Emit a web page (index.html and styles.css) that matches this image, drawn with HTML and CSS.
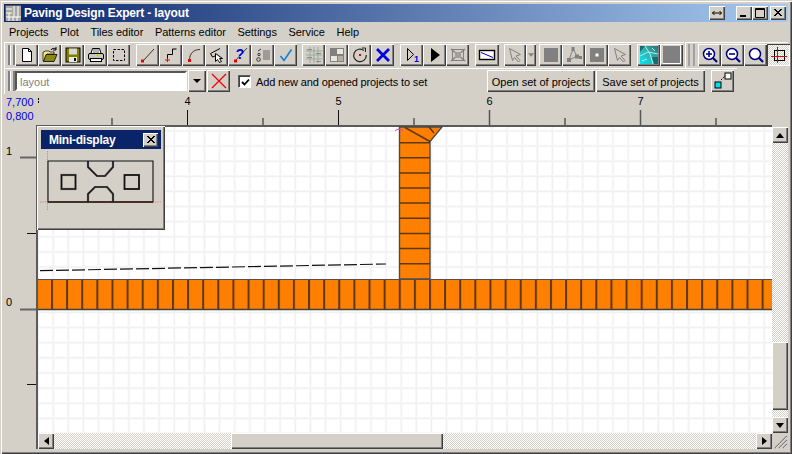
FILE: index.html
```html
<!DOCTYPE html>
<html lang="en">
<head>
<meta charset="utf-8">
<title>Paving Design Expert - layout</title>
<link rel="stylesheet" href="styles.css">
</head>
<body>
<div class="window">
  <header class="titlebar">
    <svg class="app-icon" viewBox="0 0 16 16"><rect width="16" height="16" fill="#a8a8a0"/><path d="M0 4h7M0 8h7M0 12h16M9 0v12M13 0v12M4 8v8M8 12v4M12 12v4" stroke="#fff" fill="none"/><path d="M0 .5h16M.5 0v16" stroke="#555" fill="none"/></svg>
    <span class="title-text">Paving Design Expert - layout</span>
    <button class="cap cap-wide"><svg viewBox="0 0 16 14"><path d="M3.500 7h9M5.500 5l-2 2 2 2M10.500 5l2 2-2 2" fill="none" stroke="#000"/></svg></button>
    <div class="cap-group">
      <button class="cap"><svg viewBox="0 0 16 14"><rect x="4" y="9" width="6" height="2" fill="#000"/></svg></button>
      <button class="cap"><svg viewBox="0 0 16 14"><path d="M3.500 2.500h9v9h-9zM3.500 3.500h9" fill="none" stroke="#000"/></svg></button>
      <button class="cap cap-close"><svg viewBox="0 0 16 14"><path d="M4 3l7 7M5 3l7 7M11 3l-7 7M12 3l-7 7" stroke="#000" fill="none"/></svg></button>
    </div>
  </header>

  <nav class="menubar">
    <span>Projects</span><span>Plot</span><span>Tiles editor</span><span>Patterns editor</span><span>Settings</span><span>Service</span><span>Help</span>
  </nav>

  <div class="bar-row">
    <div class="toolbar tb-main">
      <i class="grip"></i>
      <button class="tool"><svg viewBox="0 0 16 16"><path d="M3.500 1.500h6l3 3v10h-9z" fill="#fff" stroke="#000"/><path d="M9.500 1.500v3h3" fill="none" stroke="#000"/></svg></button>
      <button class="tool"><svg viewBox="0 0 16 16"><path d="M1 14V5h1l1-1h4l1 1h4v2H5l-2 7z" fill="#f4e48c" stroke="#000" stroke-width=".7"/><path d="M1.500 14.500l2.500-7h11l-3 7z" fill="#8a8a10" stroke="#000" stroke-width=".8"/><path d="M9 3c1-2 3-2 5-1M14 0v3h-3" fill="none" stroke="#000"/></svg></button>
      <button class="tool"><svg viewBox="0 0 16 16"><rect x="1" y="1" width="14" height="14" fill="#808000" stroke="#000"/><rect x="4" y="1.500" width="8" height="6" fill="#d8d8d0"/><rect x="4" y="10" width="8" height="5" fill="#e8e8e0"/><rect x="9" y="11" width="2" height="3" fill="#000"/></svg></button>
      <button class="tool"><svg viewBox="0 0 16 16"><path d="M4.500 1.500h7l1.500 5h-10z" fill="#fff" stroke="#000"/><path d="M5 3h6M5 5h6" stroke="#666"/><rect x=".5" y="6.500" width="15" height="6" rx="1.500" fill="#c8c8c0" stroke="#000"/><rect x="2.500" y="11.500" width="11" height="3" fill="#fff" stroke="#000"/><rect x="8" y="8" width="3" height="1" fill="#dc0"/></svg></button>
      <button class="tool"><svg viewBox="0 0 16 16"><rect x="2.500" y="2.500" width="11" height="11" fill="none" stroke="#000" stroke-dasharray="2.500 1.500"/></svg></button>
      <button class="tool sp6"><svg viewBox="0 0 16 16"><path d="M3 14L14 2" stroke="#333" fill="none"/><rect x="1" y="12.500" width="3" height="3" fill="#e00"/></svg></button>
      <button class="tool"><svg viewBox="0 0 16 16"><path d="M4.500 13V7.500h5V2h4" stroke="#000" fill="none"/><path d="M2 13h5M4.500 11v4" stroke="#e00" fill="none"/></svg></button>
      <button class="tool"><svg viewBox="0 0 16 16"><path d="M3.500 13C3.500 7 7 2.500 14 2.500" stroke="#333" fill="none"/><rect x="2" y="12" width="3" height="3" fill="#e00"/></svg></button>
      <button class="tool"><svg viewBox="0 0 16 16"><path d="M1.500 6.500L11 1.500M1.500 6.500l2 3.500 5-2" fill="none" stroke="#000"/><path d="M6.500 6.500v8l2-2 2 3 2-1-2-3h3z" fill="#fff" stroke="#000"/></svg></button>
      <button class="tool"><svg viewBox="0 0 16 16"><path d="M2 15L15 1" stroke="#444" fill="none"/><text x="8" y="12" class="help-mark">?</text><rect x="2" y="12.500" width="3" height="3" fill="#e00"/></svg></button>
      <button class="tool"><svg viewBox="0 0 16 16"><path d="M8 4h7M8 6h7M8 8h7M8 10h7M8 12h7" stroke="#666" fill="none"/><circle cx="3.500" cy="12.500" r="1.800" fill="none" stroke="#333"/><circle cx="4" cy="7.500" r="1.200" fill="none" stroke="#333"/><path d="M3 4l3-2" stroke="#333"/></svg></button>
      <button class="tool"><svg viewBox="0 0 16 16"><path d="M2.500 9l3.500 4.500 7.500-11" fill="none" stroke="#1080d0" stroke-width="1.600"/></svg></button>
      <button class="tool sp5"><svg viewBox="0 0 16 16"><path d="M0 4h16M0 8h16M0 12h16M4 0v16M8 0v16M12 0v16" stroke="#9aaa9a" fill="none"/><path d="M1 2.500h5M10 6.500h5M1 10.500h5M10 14.500h5" stroke="#8a8a8a" fill="none"/></svg></button>
      <button class="tool"><svg viewBox="0 0 16 16"><rect x="1" y="1" width="14" height="14" fill="#808080"/><rect x="8" y="2" width="6" height="5" fill="#e8e8e0"/><rect x="2" y="9" width="6" height="5" fill="#e8e8e0"/><rect x="9" y="9" width="5" height="5" fill="#b0b0a8"/></svg></button>
      <button class="tool"><svg viewBox="0 0 16 16"><path d="M12 3.500A6.300 6.300 0 1 0 14.300 8" fill="none" stroke="#222" stroke-width="1.200"/><path d="M10 1h3.500v4" fill="none" stroke="#222"/><rect x="7" y="7" width="2" height="2" fill="#e00"/></svg></button>
      <button class="tool"><svg viewBox="0 0 16 16"><path d="M2 2l12 12M14 2L2 14" stroke="#0000e0" stroke-width="2.800" fill="none"/></svg></button>
      <button class="tool sp6"><svg viewBox="0 0 16 16"><path d="M3.500 1.500v12l6-6z" fill="none" stroke="#000"/><text x="10" y="15" class="one">1</text></svg></button>
      <button class="tool"><svg viewBox="0 0 16 16"><path d="M4 1l9 7-9 7z" fill="#000"/></svg></button>
      <button class="tool"><svg viewBox="0 0 16 16"><rect x="2.500" y="2.500" width="11" height="11" fill="none" stroke="#808080"/><path d="M1 2l14 12M15 2L1 14" stroke="#808080" stroke-width="1.400"/><rect x="5" y="5" width="6" height="6" fill="#a0a098"/></svg></button>
      <button class="tool tool-w24 sp6"><svg viewBox="0 0 16 16"><rect x=".5" y="3.500" width="15" height="9" fill="#fff" stroke="#000" stroke-width="1.400"/><path d="M2 5.500l12 5" stroke="#0000d0"/></svg></button>
      <button class="tool tool-w22 sp5"><svg viewBox="0 0 16 16"><path d="M2.500 1.500l11 6-4.500 1.500 4 4.500-1.500 1.500-4-4.500-2 3z" fill="#d4d0c8" stroke="#808080"/></svg></button>
      <button class="tool tool-drop"><svg viewBox="0 0 8 4"><path d="M0 0h7L3.500 4z" fill="#808080"/></svg></button>
      <button class="tool sp3"><svg viewBox="0 0 16 16"><rect x="1" y="1" width="14" height="14" fill="#808080"/></svg></button>
      <button class="tool"><svg viewBox="0 0 16 16"><path d="M7 2L3 13M7 2l4 7-8 4M11 9l4 1" stroke="#808080" fill="none"/><rect x="5.500" y="0" width="3" height="4" fill="#808080"/><rect x="1" y="11" width="4" height="4" fill="#808080"/><rect x="9" y="7.500" width="4" height="4" fill="#808080"/><rect x="13" y="9" width="3" height="3" fill="#808080"/></svg></button>
      <button class="tool"><svg viewBox="0 0 16 16"><rect x="1" y="1" width="14" height="14" fill="#808080"/><rect x="6.500" y="6.500" width="3" height="3" fill="#fff"/></svg></button>
      <button class="tool"><svg viewBox="0 0 16 16"><path d="M2.500 1.500l11 6-4.500 1.500 4 4.500-1.500 1.500-4-4.500-2 3z" fill="#d4d0c8" stroke="#808080"/></svg></button>
      <button class="tool sp6"><svg class="big" viewBox="0 0 18 18"><defs><linearGradient id="tex" x1="0" y1="1" x2="1" y2="0"><stop offset="0" stop-color="#00e8f4"/><stop offset=".55" stop-color="#30b0b0"/><stop offset="1" stop-color="#2a7070"/></linearGradient></defs><rect width="18" height="18" fill="url(#tex)"/><path d="M5 0l5 8 3 10M0 10l8-4 10 2M12 2l3 3M2 15l5-2" stroke="#b0f0e8" fill="none"/><path d="M0 0h5L0 6zM12 11h6v7h-4z" fill="#1c6a70"/></svg></button>
      <button class="tool"><svg class="big" viewBox="0 0 18 18"><rect width="18" height="18" fill="#808080"/><path d="M0 17.500h17.500V0" stroke="#fff" fill="none"/></svg></button>
    </div>
    <div class="toolbar tb-zoom">
      <i class="sep-bars"></i>
      <button class="tool"><svg viewBox="0 0 16 16"><circle cx="7" cy="7" r="5.500" fill="#fff" stroke="#000080" stroke-width="1.500"/><path d="M11 11l4 4" stroke="#000080" stroke-width="2.200"/><path d="M4 7h6M7 4v6" stroke="#000080" stroke-width="1.600"/></svg></button>
      <button class="tool"><svg viewBox="0 0 16 16"><circle cx="7" cy="7" r="5.500" fill="#fff" stroke="#000080" stroke-width="1.500"/><path d="M11 11l4 4" stroke="#000080" stroke-width="2.200"/><path d="M4 7h6" stroke="#000080" stroke-width="1.600"/></svg></button>
      <button class="tool"><svg viewBox="0 0 16 16"><circle cx="7" cy="7" r="5.500" fill="#fff" stroke="#000080" stroke-width="1.500"/><path d="M11 11l4 4" stroke="#000080" stroke-width="2.200"/></svg></button>
      <button class="tool tool-on"><svg viewBox="0 0 16 16"><rect x="3.500" y="3.500" width="10" height="10" fill="none" stroke="#000"/><path d="M0 9.500h16M6.500 0v16" stroke="#e00000" fill="none"/></svg></button>
    </div>
  </div>

  <div class="bar-row">
    <div class="toolbar tb-set">
      <i class="grip"></i>
      <div class="combo-field">layout</div>
      <button class="tool combo-drop"><svg viewBox="0 0 8 4"><path d="M0 0h8L4 4z" fill="#000"/></svg></button>
      <button class="tool combo-x"><svg viewBox="0 0 16 16"><path d="M1 1l14 14M15 1L1 15" stroke="#f00000" stroke-width="1.300"/></svg></button>
      <label class="check-row">
        <span class="check-box"><svg viewBox="0 0 9 9"><path d="M1 4l2.500 2.500L8 1.500" fill="none" stroke="#000" stroke-width="1.800"/></svg></span>
        <span class="check-text">Add new and opened projects to set</span>
      </label>
      <button class="text-btn btn-open">Open set of projects</button>
      <button class="text-btn btn-save">Save set of projects</button>
      <button class="tool tool-link"><svg viewBox="0 0 18 18"><rect x="1" y="10" width="6" height="6" fill="#00e0f0" stroke="#000"/><rect x="11" y="1" width="6" height="6" fill="#fff" stroke="#000"/><path d="M7 8l4-4" stroke="#000" stroke-dasharray="1.500 1"/></svg></button>
    </div>
  </div>

  <main class="workspace">
    <svg class="ruler-top" viewBox="4 94 784 33">
      <text x="6" y="106" class="coord">7,700</text>
      <text x="6" y="120" class="coord">0,800</text>
      <path d="M38.500 98v6" stroke="#000" stroke-dasharray="2 1"/>
      <g class="ruler-num">
        <text x="187.500" y="105">4</text><text x="338.500" y="105">5</text><text x="489.500" y="105">6</text><text x="640.500" y="105">7</text>
      </g>
      <path d="M187.500 110v15M338.500 110v15" stroke="#111"/>
      <path d="M489.500 110v15M640.500 110v15" stroke="#555" stroke-width="1.500"/>
      <path d="M112 118v7M263 118v7M414 118v7M565 118v7M716 118v7" stroke="#444" stroke-width="1.300"/>
    </svg>
    <div class="work-middle">
      <svg class="ruler-left" viewBox="4 127 32 306">
        <text x="6" y="155" class="left-num">1</text>
        <text x="6" y="306" class="left-num">0</text>
        <path d="M20 157.500h16M20 309.500h16" stroke="#666" stroke-width="1.800"/>
        <path d="M27 233.500h9M27 384.500h9" stroke="#111"/>
      </svg>
      <div class="canvas-frame">
        <svg class="drawing" viewBox="38 127 734 306">
          <defs>
            <pattern id="gridv" patternUnits="userSpaceOnUse" x="7.450" y="0" width="15.130" height="20"><rect x="0" width="1.200" height="20" fill="#f0f0f0"/><rect x="14.130" width="1" height="20" fill="#f7f7f7"/></pattern>
            <pattern id="gridh" patternUnits="userSpaceOnUse" x="0" y="9.500" width="20" height="15.130"><rect y="0" width="20" height="1.200" fill="#f0f0f0"/><rect y="14.130" width="20" height="1" fill="#f7f7f7"/></pattern>
            <pattern id="tilev" patternUnits="userSpaceOnUse" x="51" y="0" width="15.120" height="20"><rect width="2" height="20" fill="#5e3810"/></pattern>
          </defs>
          <rect x="38" y="127" width="734" height="306" fill="#fff"/>
          <rect x="38" y="127" width="734" height="306" fill="url(#gridv)"/>
          <rect x="38" y="127" width="734" height="306" fill="url(#gridh)"/>
          <path d="M40 270.700L386 264" fill="none" stroke="#111" stroke-width="1.200" stroke-dasharray="13 3"/>
          <path d="M399.500 127H442L430 141.500V279H399.500z" fill="#ff8000" stroke="#4a4a4a" stroke-width="1.400"/>
          <path d="M405 127.500L430 141.500M429 127l5 6M399.500 142.700H430M399.500 157.800H430M399.500 172.900H430M399.500 188H430M399.500 203.100H430M399.500 218.300H430M399.500 233.400H430M399.500 248.500H430M399.500 263.700H430" stroke="#5e3810" stroke-width="1.500" fill="none"/>
          <path d="M395 131q4-4 8 0" stroke="#d040e0" fill="none"/>
          <rect x="38" y="279" width="734" height="30.500" fill="#ff8000"/>
          <rect x="38" y="279" width="734" height="30.500" fill="url(#tilev)"/>
          <path d="M38 279.500h734" stroke="#505050"/>
          <path d="M38 309.500h734" stroke="#404040" stroke-width="1.600"/>
        </svg>
      </div>
      <div class="vscroll">
        <button class="sb-btn"><svg viewBox="0 0 8 5"><path d="M4 0l4 5H0z" fill="#000"/></svg></button>
        <div class="sb-track sb-track-v1"></div>
        <div class="sb-thumb"></div>
        <div class="sb-track sb-track-v2"></div>
        <button class="sb-btn"><svg viewBox="0 0 8 5"><path d="M0 0h8L4 5z" fill="#000"/></svg></button>
      </div>
    </div>
    <div class="hscroll">
      <button class="sb-btn sb-first"><svg viewBox="0 0 5 8"><path d="M5 0v8L0 4z" fill="#000"/></svg></button>
      <div class="sb-track sb-track-h1"></div>
      <div class="sb-thumb"></div>
      <div class="sb-track sb-track-h2"></div>
      <button class="sb-btn"><svg viewBox="0 0 5 8"><path d="M0 0v8l5-4z" fill="#000"/></svg></button>
      <svg class="size-grip" viewBox="0 0 16 16"><path d="M3 15L15 3M7 15l8-8M11 15l4-4" stroke="#808080" stroke-width="1.200"/><path d="M4 15L15 4M8 15l7-7M12 15l3-3" stroke="#fff" stroke-width=".5"/></svg>
    </div>

    <aside class="mini">
      <div class="mini-title"><span>Mini-display</span><button class="cap mini-close"><svg viewBox="0 0 16 14"><path d="M4 3l7 7M5 3l7 7M11 3l-7 7M12 3l-7 7" stroke="#000" fill="none"/></svg></button></div>
      <svg class="mini-draw" viewBox="41 150 119 76">
        <path d="M47.500 152v60M40 203h121" stroke="#f08080" stroke-dasharray="1.500 1"/>
        <g fill="none" stroke="#5a5a5a" stroke-width="2.200">
          <path d="M88 162v6l9 9h8l8-9v-6"/>
          <path d="M88 203v-8l7-7h12l6 7v8"/>
          <rect x="61.500" y="176" width="14" height="14"/>
        </g>
        <g fill="none" stroke="#111" stroke-width="1.100">
          <path d="M48 162H153V203H48z"/>
          <path d="M88 162v6l9 9h8l8-9v-6"/>
          <path d="M88 203v-8l7-7h12l6 7v8"/>
          <rect x="61.500" y="176" width="14" height="14"/>
          <rect x="124.500" y="176" width="14.500" height="14" stroke-width="1.800"/>
        </g>
        <path d="M48 203H153" stroke="#321" stroke-width="1.600"/>
      </svg>
    </aside>
  </main>
</div>
</body>
</html>
```
FILE: styles.css
```css
* { box-sizing: border-box; }
html, body { margin: 0; padding: 0; }
body { width: 792px; height: 454px; overflow: hidden; background: #d4d0c8; font-family: "Liberation Sans", Arial, sans-serif; font-size: 11px; color: #000; }
button { font: inherit; color: inherit; padding: 0; margin: 0; border: 0; background: #d4d0c8; display: flex; align-items: center; justify-content: center; }
svg { display: block; overflow: visible; }

.window { width: 792px; height: 454px; padding: 4px; display: flex; flex-direction: column; background: #d4d0c8; box-shadow: inset 0 1px 0 #d4d0c8, inset 1px 0 0 #d4d0c8, inset 0 2px 0 #fff, inset 2px 0 0 #fff, inset -1px -1px 0 #404040, inset -2px -2px 0 #808080; }

.titlebar { height: 18px; flex: none; display: flex; align-items: center; padding: 0 2px 0 1px; background: linear-gradient(90deg, #0a246a, #a6caf0); }
.app-icon { width: 16px; height: 16px; flex: none; }
.title-text { margin-left: 3px; flex: 1; color: #fff; font-weight: 700; font-size: 12px; letter-spacing: -.16px; white-space: nowrap; }
.cap { width: 16px; height: 14px; flex: none; box-shadow: inset 1px 1px 0 #fff, inset -1px -1px 0 #404040, inset -2px -2px 0 #808080; }
.cap svg { width: 16px; height: 14px; }
.cap-wide { margin-right: 11px; }
.cap-group { display: flex; }
.cap-close { margin-left: 2px; }

.menubar { height: 20px; flex: none; display: flex; align-items: center; padding-left: 5px; gap: 11.6px; font-size: 11px; letter-spacing: -.04px; }

.bar-row { display: flex; flex: none; }
.toolbar { display: flex; align-items: center; height: 26px; box-shadow: inset 1px 1px 0 #fff, inset -1px -2px 0 #d4d0c8, inset -1px -1px 0 #808080; }
.tb-main { width: 681px; padding-left: 4px; }
.tb-zoom { width: 103px; margin-left: 1px; }
.tb-set { width: 733px; padding-left: 4px; }
.grip { width: 7px; height: 20px; flex: none; border-left: 2px solid #808080; border-right: 2px solid #808080; box-shadow: inset 1px 0 0 #fff; }
.sep-bars { width: 7px; height: 22px; flex: none; margin: 0 3px; border-left: 2px solid #a0a0a0; border-right: 2px solid #a0a0a0; }

.tool { width: 23px; height: 22px; flex: none; box-shadow: inset 1px 1px 0 #fff, inset -1px -1px 0 #404040, inset -2px -2px 0 #808080; }
.tool svg { width: 16px; height: 16px; }
.tool svg.big { width: 18px; height: 18px; }
.tool-w24 { width: 24px; }
.tool-w22 { width: 22px; }
.tool-drop { width: 10px; }
.tool-drop svg { width: 7px; height: 4px; }
.tool-on { background: repeating-conic-gradient(#fff 0 25%, #d4d0c8 0 50%) 0 0 / 2px 2px; box-shadow: inset 1px 1px 0 #404040, inset -1px -1px 0 #fff; }
.sp3 { margin-left: 3px; }
.sp5 { margin-left: 5px; }
.sp6 { margin-left: 6px; }
.help-mark { font: 700 14px "Liberation Sans", sans-serif; fill: #0000e0; text-anchor: middle; }
.one { font: 700 9px "Liberation Sans", sans-serif; fill: #0000e0; }

.combo-field { width: 172px; height: 20px; flex: none; padding-left: 3px; line-height: 18px; color: #808080; background: #fff; font-size: 11px; border: 2px solid; border-color: #555 #fff #fff #555; }
.combo-drop { width: 18px; margin-left: 1px; }
.combo-drop svg { width: 8px; height: 4px; }
.combo-x { width: 23px; margin-left: 1px; }
.check-row { display: flex; align-items: center; gap: 5px; margin-left: 8px; width: 249px; font-size: 11px; letter-spacing: -.13px; white-space: nowrap; }
.check-text { padding-top: 1px; }
.check-box { width: 13px; height: 13px; flex: none; padding: 2px; background: #fff; border: 1px solid; border-color: #606060 #fff #fff #606060; box-shadow: inset 1px 1px 0 #404040; }
.check-box svg { width: 9px; height: 9px; }
.text-btn { height: 22px; flex: none; padding-top: 1px; font-size: 11px; box-shadow: inset 1px 1px 0 #fff, inset -1px -1px 0 #404040, inset -2px -2px 0 #808080; }
.btn-open { width: 108px; }
.btn-save { width: 109px; margin-left: 1px; }
.tool-link { margin-left: 6px; }
.tool-link svg { width: 18px; height: 18px; }

.workspace { position: relative; flex: 1; display: flex; flex-direction: column; min-height: 0; }
.ruler-top { width: 784px; height: 33px; flex: none; }
.coord { font-size: 11px; fill: #0000e0; }
.ruler-num text { font-size: 11px; text-anchor: middle; }
.left-num { font-size: 11px; }
.work-middle { display: flex; flex: none; height: 306px; }
.ruler-left { width: 32px; height: 306px; flex: none; }
.canvas-frame { width: 736px; height: 308px; flex: none; border-left: 2px solid #5a5a5a; border-top: 2px solid #5a5a5a; margin-top: -2px; }
.drawing { width: 734px; height: 306px; }

.vscroll { width: 16px; flex: none; display: flex; flex-direction: column; }
.hscroll { height: 16px; flex: none; display: flex; padding-left: 34px; }
.sb-btn { width: 16px; height: 16px; flex: none; box-shadow: inset 1px 1px 0 #fff, inset -1px -1px 0 #404040, inset -2px -2px 0 #808080; }
.sb-first { box-shadow: inset 1px 1px 0 #fff, inset -1px -1px 0 #404040, inset -2px -2px 0 #808080, -2px 0 0 #5a5a5a; }
.vscroll .sb-btn svg { width: 8px; height: 5px; }
.hscroll .sb-btn svg { width: 5px; height: 8px; }
.sb-track { background: repeating-conic-gradient(#fff 0 25%, #d4d0c8 0 50%) 0 0 / 2px 2px; }
.sb-thumb { flex: none; background: #d4d0c8; box-shadow: inset 1px 1px 0 #fff, inset -1px -1px 0 #404040, inset -2px -2px 0 #808080; }
.vscroll .sb-thumb { height: 68px; }
.hscroll .sb-thumb { width: 212px; }
.sb-track-v1 { height: 199px; }
.sb-track-v2 { height: 7px; }
.sb-track-h1 { width: 177px; }
.sb-track-h2 { width: 313px; }
.size-grip { width: 16px; height: 16px; flex: none; }

.mini { position: absolute; left: 33px; top: 32px; width: 128px; height: 104px; padding: 4px; background: #d4d0c8; box-shadow: inset 1px 1px 0 #fff, inset -1px -1px 0 #404040, inset -2px -2px 0 #808080; }
.mini-title { height: 19px; display: flex; align-items: center; justify-content: space-between; padding: 0 3px 0 8px; background: #0a246a; color: #fff; font-weight: 700; font-size: 12px; letter-spacing: -.25px; }
.mini-close { width: 15px; height: 14px; }
.mini-draw { width: 119px; height: 76px; }
```
